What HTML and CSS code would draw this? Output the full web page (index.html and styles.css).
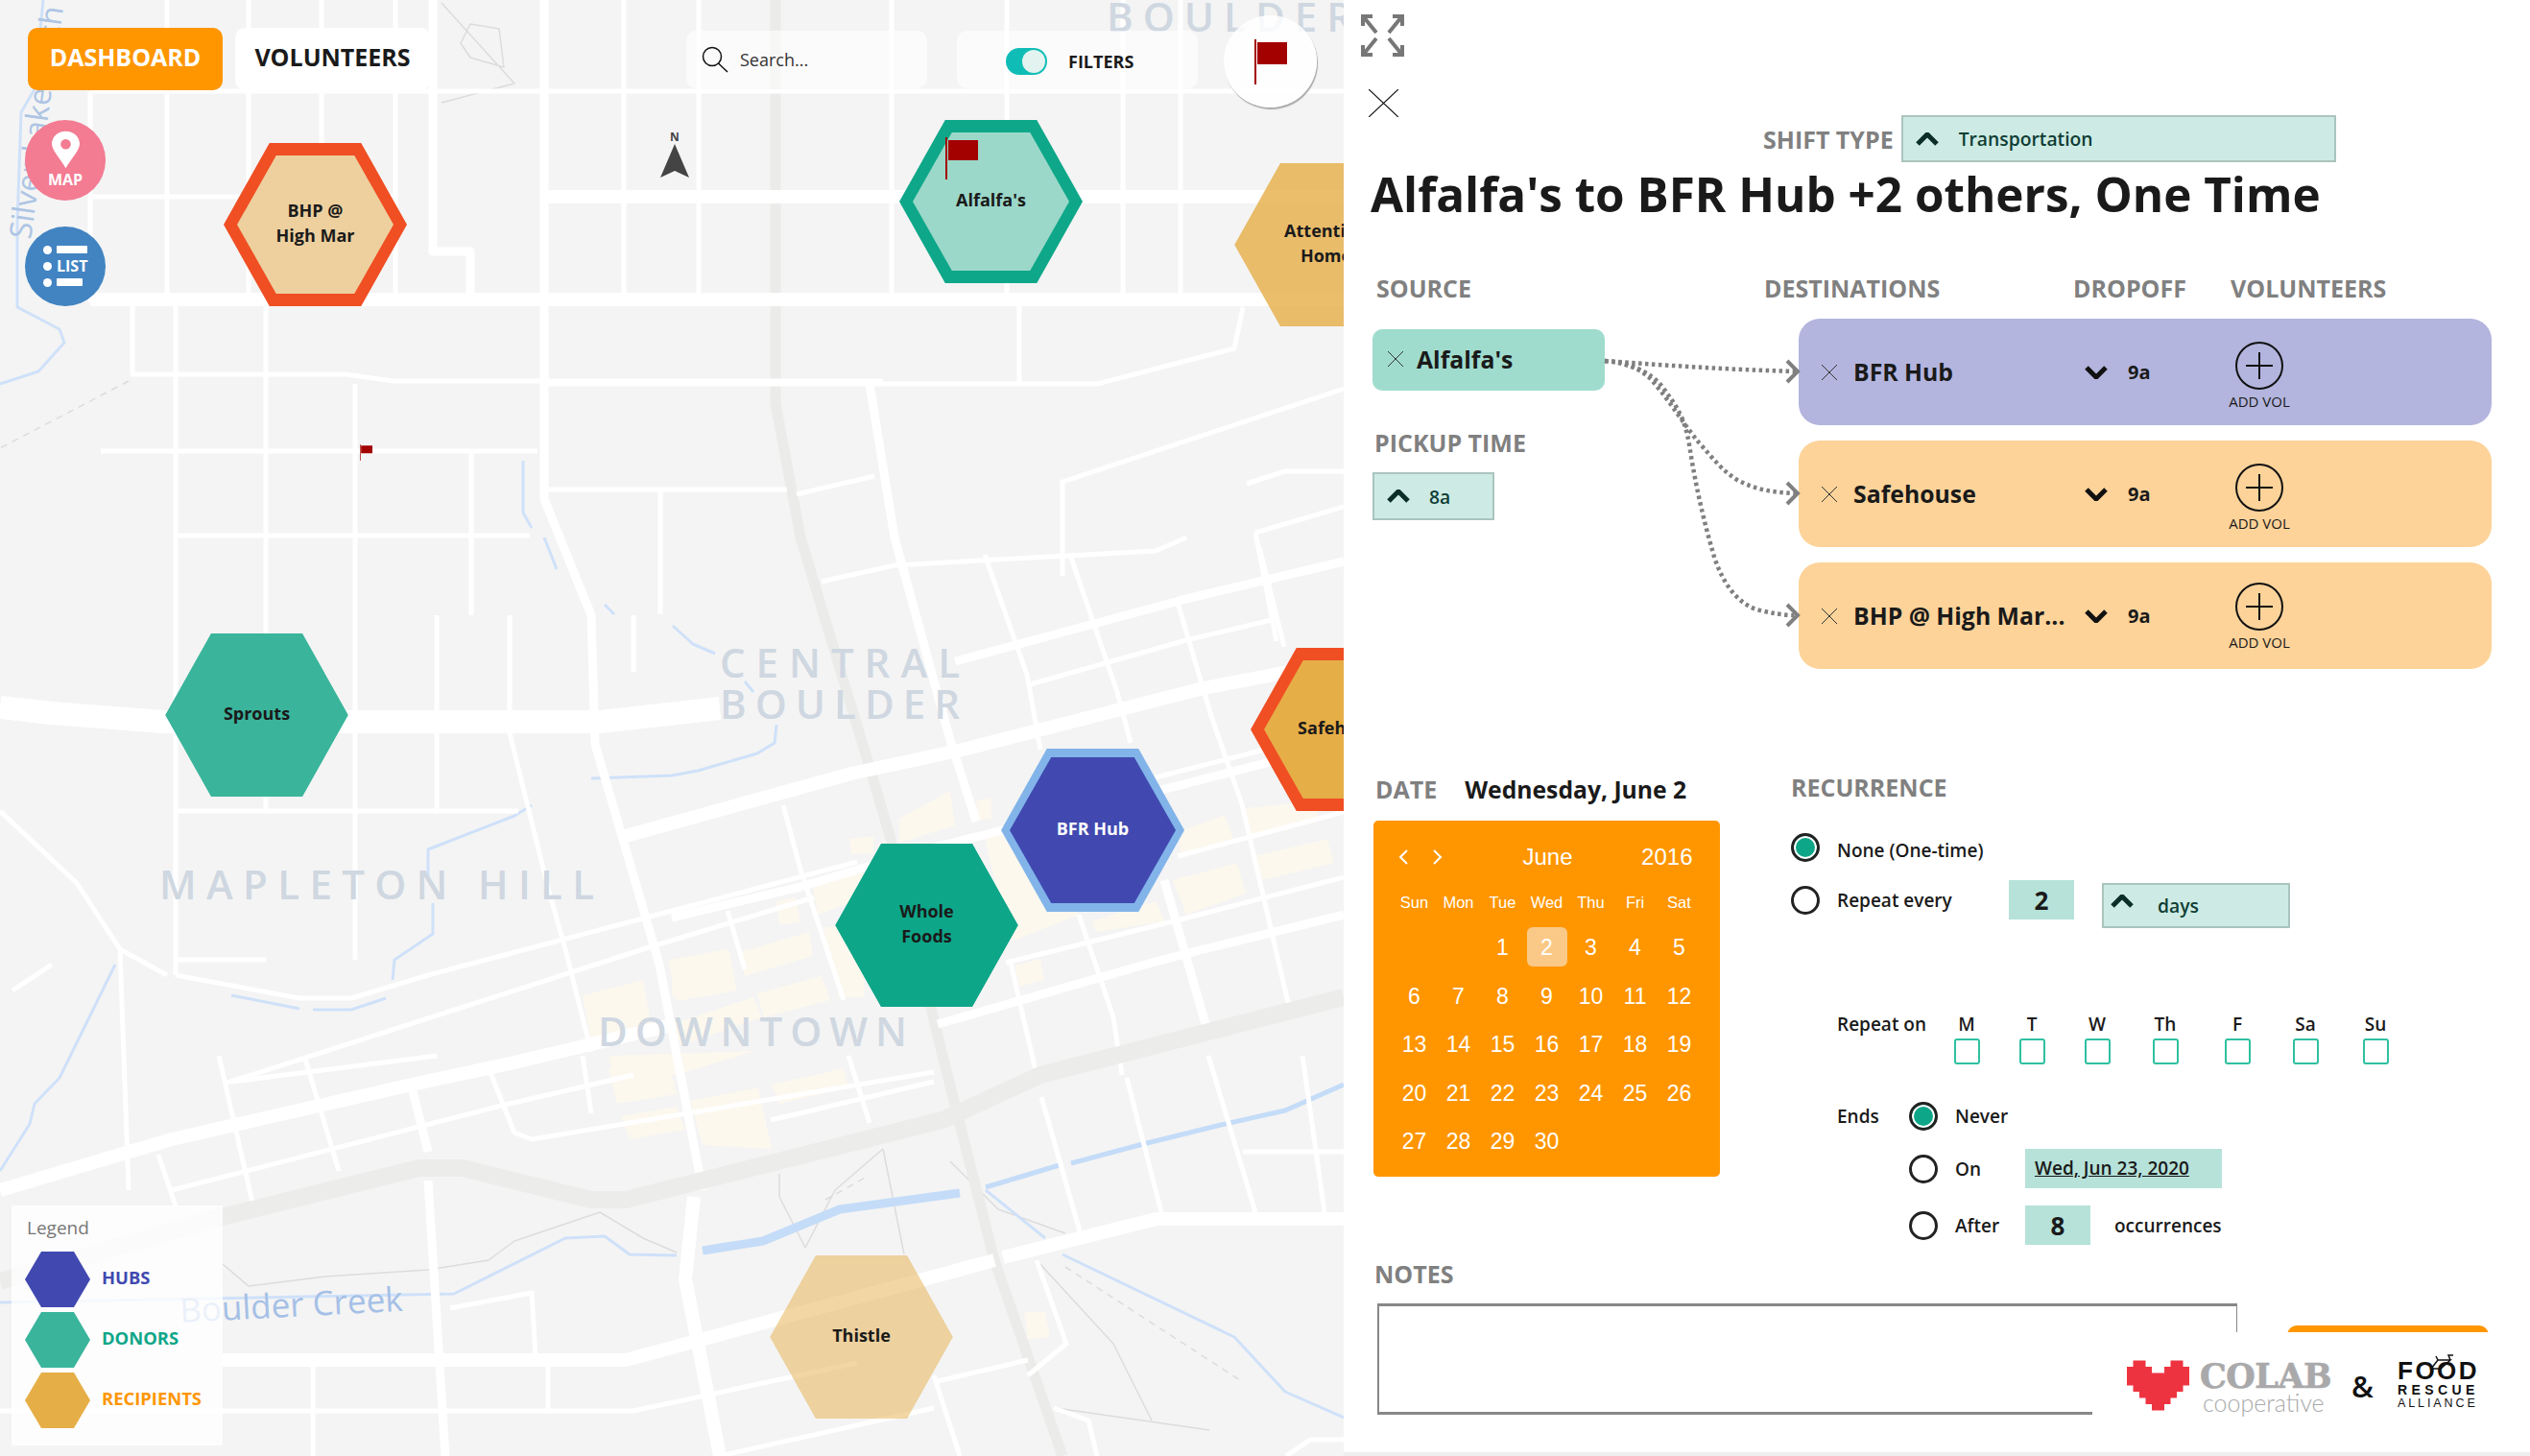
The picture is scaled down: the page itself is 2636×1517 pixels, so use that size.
FILE: index.html
```html
<!DOCTYPE html>
<html lang="en">
  <head>
    <meta charset="UTF-8">
    <title>Shift editor</title>
    <link rel="stylesheet" href="styles.css">
  </head>
  <body>
    <div class="stage">
      <div class="map">
        <svg class="map-art" viewBox="0 0 1400 1517" aria-hidden="true">
          <g class="blocks">
            <path d="M937 853L990 824L995 860L937 878ZM1017 835L1033 831L1033 853L1019 855ZM885 874L910 871L910 889L887 890ZM847 924L914 903L914 930L852 953ZM809 939L829 935L834 960L812 964ZM771 992L843 971L847 996L776 1017ZM700 1014L758 996L762 1024L700 1039ZM858 967L896 960L901 1039L874 1039ZM789 1035L856 1017L865 1042L796 1060ZM700 1067L785 1039L794 1060L709 1089ZM1026 874L1080 860L1124 953L1053 981ZM1222 917L1289 899L1298 931L1236 953ZM1298 842L1370 835L1374 856L1303 874ZM1227 867L1276 849L1285 874L1231 892ZM1307 892L1383 874L1390 899L1316 917ZM1137 960L1205 939L1213 960L1142 971ZM1057 1006L1084 999L1088 1021L1062 1028ZM634 1113L696 1107L705 1140L643 1150ZM647 1163L705 1153L714 1177L656 1187ZM719 1147L790 1133L804 1197L732 1193ZM804 1130L879 1113L884 1133L812 1150ZM634 1100L786 1095L705 1120L638 1117ZM1067 1367L1089 1367L1094 1393L1071 1395ZM607 1037L670 1021L679 1070L616 1085ZM696 1000L759 989L768 1032L705 1043Z"/>
          </g>
          <g class="trail">
            <path d="M460 3L536 87L460 107M480 45L490 25L520 30L525 70L490 60ZM232 1317L259 1340L339 1330L446 1323L509 1313L536 1293L625 1263L670 1290L705 1305M839 1300L812 1247L812 1223M920 1197L942 1307M990 1210L1040 1260L1110 1285M920 1197L870 1240L839 1300M1080 1313L1160 1400L1200 1480M1100 1467L1260 1490"/>
            <path class="trail-dash" d="M134 397L0 467M1110 1320L1295 1440M860 1250L905 1225"/>
          </g>
          <g class="creek">
            <path d="M45 0L36 93L22 117L18 233L18 320L62 343L67 357L40 387L0 400"/>
            <path d="M545 480L545 534L554 550M567 560L580 593M630 630L640 640M701 652L722 671L745 681M776 710L785 721M809 755L807 774L789 785L727 803L700 808L616 811M554 839L536 850L446 885L446 914M451 941L451 973L411 1000L409 1021M241 1037L312 1051M326 1052L366 1052L402 1040"/>
            <path d="M120 1005L62 1123L36 1150L31 1171L0 1220M129 992L165 1010"/>
            <path d="M0 1357L473 1348L589 1290L630 1288L656 1307L705 1308M1027 1240L1089 1290M1107 1307L1286 1393L1339 1450L1400 1477"/>
            <path class="creek-wide" d="M732 1303L795 1293L875 1260L1000 1243"/>
            <path class="creek-mid" d="M1027 1237L1107 1213M1116 1212L1187 1193L1268 1173L1339 1157L1400 1130"/>
          </g>
          <g class="rail">
            <path d="M808 0V420L834 560L905 796L928 874L982 1100L1036 1313L1107 1517"/>
          </g>
          <g class="road">
            <path d="M94 95V315M174 0V312M259 0V312M335 0V312M412 0V312M650 0V312M728 0V312M929 0V312M1049 0V312M1170 0V312M1230 0V312M94 95H1400M94 205H412"/>
            <path d="M138 312V390H360L410 397H920M571 400H1143L1286 363L1295 320M1062 312V400M183 312V1016M277 312V845M370 400V1000M491 470V641M455 641V845M531 641V764L571 925L589 989L616 1096M660 641V700M688 510V640M105 470H560M183 558H552M571 510H820M183 845H540M183 1000H277"/>
            <path d="M830 515L911 496M1400 405L1107 502V600M1299 504L1339 491H1400M1308 555L1400 528M1308 555L1330 668M856 606L932 589L1204 574L1236 560M1026 578L1070 703L1084 781M1115 578L1164 721L1178 774M1227 628L1262 746L1294 838L1343 1049M1312 570L1338 674M1070 714L1236 667L1325 646M1204 810L1400 760M1227 892L1400 846M1048 1003L1222 960L1400 914"/>
            <path d="M816 839L834 906L879 1042M758 949L776 1010M1124 953L1160 1060L1169 1120M1053 1003L1080 1120M0 845L80 920L125 989L174 1016M13 1032L54 1005M125 989L134 1240M183 1016L312 1040H366L446 1016L893 898M237 1128L670 989L848 935M179 1240L518 1153L660 1120M241 1127L455 1100M228 1100L263 1253M317 1100L353 1220M165 1203L183 1257M509 1113L536 1180L554 1187L973 1117M607 1100L616 1160M884 1100L906 1170M803 1167L973 1127M1085 1143L1125 1283M1174 1123L1210 1263M1259 1100L1308 1263M1357 1100L1380 1263M1295 1200H1400"/>
            <path d="M0 1470H660L893 1420M973 1440L1071 1417M750 1517L973 1467M469 1363L554 1347L558 1413M326 1420V1517M571 1420V1470M973 1433L1000 1517M1080 1313L1111 1400L1071 1433M1098 1467L1134 1480L1143 1517M1340 1517L1365 1500H1400"/>
          </g>
          <g class="road-mid">
            <path d="M451 0V262H490V312M567 0V520L616 641L620 775L687 1005L732 1240M995 689L1236 624L1400 585M700 956L834 924L950 889L1021 871L1164 835L1400 774M977 1067L1200 1003L1254 989L1400 953M1213 917L1258 1074M932 560L990 771L1017 856M906 400L932 560M429 1133L446 1200M446 1230L464 1517"/>
          </g>
          <g class="road-big">
            <path d="M94 312H1400M571 205H1400M652 871L887 806L1003 781L1254 717L1400 689M0 1240L179 1187L429 1130L536 1107L700 1068M232 1417H652L1036 1313M1045 1310L1205 1270H1400"/>
            <path d="M723 1247L714 1333L750 1517"/>
          </g>
          <g class="highway">
            <path d="M0 1335L223 1270L437 1217H482L616 1250H652L982 1167L1084 1120L1400 1039"/>
          </g>
          <path class="road-wide" d="M0 737L54 743L170 752H625L750 738"/>
          <g class="map-labels">
            <text x="1153" y="33" textLength="256">BOULDER</text>
            <text x="750" y="706" textLength="250">CENTRAL</text>
            <text x="750" y="749" textLength="250">BOULDER</text>
            <text x="166" y="937" textLength="453">MAPLETON HILL</text>
            <text x="623" y="1090" textLength="322">DOWNTOWN</text>
          </g>
          <text class="water-label water-ditch" transform="translate(32 250) rotate(-82)">Silver Lake Ditch</text>
          <text class="water-label" transform="translate(188 1378) rotate(-3)">Boulder Creek</text>
        </svg>

        <div class="hex node-bhp hex-ring-red"><div class="hex-in fill-pale">BHP @<br>High Mar</div></div>
        <div class="hex node-alfalfa hex-ring-green"><div class="hex-in fill-mint">Alfalfa's</div></div>
        <div class="hex node-attention"><div class="hex-in fill-sand">Attention<br>Home</div></div>
        <div class="hex node-sprouts"><div class="hex-in fill-teal">Sprouts</div></div>
        <div class="hex node-whole"><div class="hex-in fill-green">Whole<br>Foods</div></div>
        <div class="hex node-bfr hex-ring-blue"><div class="hex-in fill-indigo">BFR Hub</div></div>
        <div class="hex node-safe hex-ring-thin"><div class="hex-in fill-amber">Safehouse</div></div>
        <div class="hex node-thistle"><div class="hex-in fill-clear">Thistle</div></div>

        <svg class="flag flag-alfalfa" viewBox="0 0 34 44"><path d="M1 0V44" class="flag-pole"/><path d="M3 3H34V24H3Z"/></svg>
        <svg class="flag flag-small" viewBox="0 0 34 44"><path d="M1 0V44" class="flag-pole"/><path d="M3 3H34V24H3Z"/></svg>

        <svg class="north" viewBox="0 0 34 50">
          <text x="17" y="10">N</text>
          <path d="M17 13L32 48L17 41L2 48Z"/>
        </svg>

        <div class="nav-tabs">
          <div class="nav-tab active">DASHBOARD</div>
          <div class="nav-tab">VOLUNTEERS</div>
        </div>

        <div class="view-switch">
          <div class="view-btn view-map">
            <svg viewBox="0 0 30 40" class="pin"><path fill-rule="evenodd" d="M15 40C9 29 0 21 0 13.500C0 6 6.500 0 15 0S30 6 30 13.500C30 21 21 29 15 40ZM15 8.500A5.500 5.500 0 1 0 15 19.500A5.500 5.500 0 1 0 15 8.500Z"/></svg>
            <span>MAP</span>
          </div>
          <div class="view-btn view-list">
            <div class="list-row"><i></i><b></b></div>
            <div class="list-row"><i></i><span>LIST</span></div>
            <div class="list-row"><i></i><b class="short"></b></div>
          </div>
        </div>

        <div class="map-tools">
          <div class="tool-box search-box">
            <svg viewBox="0 0 28 28" class="search-icon"><circle cx="11" cy="11" r="9.500"/><path d="M17.500 18L27 27"/></svg>
            <span>Search...</span>
          </div>
          <div class="tool-box filter-box">
            <div class="toggle"><i></i></div>
            <span>FILTERS</span>
          </div>
          <div class="flag-btn">
            <svg class="flag flag-large" viewBox="0 0 34 47"><path d="M1 0V47" class="flag-pole"/><path d="M3 3H34V26H3Z"/></svg>
          </div>
        </div>

        <div class="legend">
          <div class="legend-title">Legend</div>
          <div class="legend-row"><div class="legend-hex hubs"></div><span class="text-hubs">HUBS</span></div>
          <div class="legend-row"><div class="legend-hex donors"></div><span class="text-donors">DONORS</span></div>
          <div class="legend-row"><div class="legend-hex recipients"></div><span class="text-recipients">RECIPIENTS</span></div>
        </div>
      </div>

      <div class="panel">
        <div class="panel-head">
          <div class="panel-tools">
            <svg class="expand-icon" viewBox="0 0 45 44">
              <path d="M2 12V2H12M3 3L16 19M43 12V2H33M42 3L29 19M2 32V42H12M3 41L16 25M43 32V42H33M42 41L29 25"/>
            </svg>
            <svg class="close-icon" viewBox="0 0 31 29"><path d="M0 0L31 29M31 0L0 29"/></svg>
          </div>
          <div class="shift-type">
            <span class="label">SHIFT TYPE</span>
            <div class="select select-wide">
              <svg class="chev chev-up" viewBox="0 0 24 14"><path d="M2 12L12 2L22 12"/></svg>
              <span>Transportation</span>
            </div>
          </div>
        </div>

        <h1 class="title">Alfalfa's to BFR Hub +2 others, One Time</h1>

        <div class="route">
          <div class="route-source">
            <div class="label label-source">SOURCE</div>
            <div class="source-chip">
              <svg class="x-icon" viewBox="0 0 18 18"><path d="M1 1L17 17M17 1L1 17"/></svg>
              <span>Alfalfa's</span>
            </div>
            <div class="label label-pickup">PICKUP TIME</div>
            <div class="select select-time">
              <svg class="chev chev-up" viewBox="0 0 24 14"><path d="M2 12L12 2L22 12"/></svg>
              <span>8a</span>
            </div>
          </div>
          <div class="route-dest">
            <div class="dest-head">
              <span class="label">DESTINATIONS</span>
              <span class="label">DROPOFF</span>
              <span class="label">VOLUNTEERS</span>
            </div>
            <div class="dest-row dest-hub">
              <svg class="x-icon" viewBox="0 0 18 18"><path d="M1 1L17 17M17 1L1 17"/></svg>
              <div class="dest-name">BFR Hub</div>
              <svg class="chev" viewBox="0 0 24 14"><path d="M2 2L12 12L22 2"/></svg>
              <div class="dest-time">9a</div>
              <div class="add-vol">
                <svg viewBox="0 0 50 50"><circle cx="25" cy="25" r="24"/><path d="M25 11V39M11 25H39"/></svg>
                <span>ADD VOL</span>
              </div>
            </div>
            <div class="dest-row dest-stop">
              <svg class="x-icon" viewBox="0 0 18 18"><path d="M1 1L17 17M17 1L1 17"/></svg>
              <div class="dest-name">Safehouse</div>
              <svg class="chev" viewBox="0 0 24 14"><path d="M2 2L12 12L22 2"/></svg>
              <div class="dest-time">9a</div>
              <div class="add-vol">
                <svg viewBox="0 0 50 50"><circle cx="25" cy="25" r="24"/><path d="M25 11V39M11 25H39"/></svg>
                <span>ADD VOL</span>
              </div>
            </div>
            <div class="dest-row dest-stop">
              <svg class="x-icon" viewBox="0 0 18 18"><path d="M1 1L17 17M17 1L1 17"/></svg>
              <div class="dest-name">BHP @ High Mar...</div>
              <svg class="chev" viewBox="0 0 24 14"><path d="M2 2L12 12L22 2"/></svg>
              <div class="dest-time">9a</div>
              <div class="add-vol add-vol-tight">
                <svg viewBox="0 0 50 50"><circle cx="25" cy="25" r="24"/><path d="M25 11V39M11 25H39"/></svg>
                <span>ADD VOL</span>
              </div>
            </div>
          </div>
          <svg class="connectors" viewBox="0 0 210 330">
            <path class="link" d="M2 33C70 38 130 42 200 44"/>
            <path class="link" d="M2 33C25 35 40 42 50 52C70 75 85 100 100 118C115 135 125 148 140 157C160 168 180 170 200 171"/>
            <path class="link" d="M2 33C30 35 50 45 62 60C75 78 85 90 90 120C96 160 105 200 116 237C125 265 140 285 160 292C175 296 190 298 200 298"/>
            <path class="tip" d="M192 33L203 44L192 55M192 160L203 171L192 182M192 287L203 298L192 309"/>
          </svg>
        </div>

        <div class="schedule">
          <div class="date-col">
            <div class="date-line">
              <span class="label">DATE</span>
              <span class="date-value">Wednesday, June 2</span>
            </div>
            <div class="calendar">
              <div class="cal-head">
                <svg viewBox="0 0 10 16" class="cal-nav"><path d="M9 1L2 8L9 15"/></svg>
                <svg viewBox="0 0 10 16" class="cal-nav cal-next"><path d="M1 1L8 8L1 15"/></svg>
                <span class="cal-month">June</span>
                <span class="cal-year">2016</span>
              </div>
              <div class="cal-week">
                <span>Sun</span><span>Mon</span><span>Tue</span><span>Wed</span><span>Thu</span><span>Fri</span><span>Sat</span>
              </div>
              <div class="cal-days">
                <span></span><span></span>
                <span>1</span><span class="selected">2</span><span>3</span><span>4</span><span>5</span>
                <span>6</span><span>7</span><span>8</span><span>9</span><span>10</span><span>11</span><span>12</span>
                <span>13</span><span>14</span><span>15</span><span>16</span><span>17</span><span>18</span><span>19</span>
                <span>20</span><span>21</span><span>22</span><span>23</span><span>24</span><span>25</span><span>26</span>
                <span>27</span><span>28</span><span>29</span><span>30</span>
              </div>
            </div>
          </div>

          <div class="rec-col">
            <div class="label rec-title">RECURRENCE</div>
            <div class="rec-row rec-none">
              <i class="radio on"></i>
              <span>None (One-time)</span>
            </div>
            <div class="rec-row rec-every">
              <i class="radio"></i>
              <span class="every-label">Repeat every</span>
              <div class="num-box">2</div>
              <div class="select select-unit">
                <svg class="chev chev-up" viewBox="0 0 24 14"><path d="M2 12L12 2L22 12"/></svg>
                <span>days</span>
              </div>
            </div>
            <div class="repeat-on">
              <span class="repeat-label">Repeat on</span>
              <span>M</span><span>T</span><span>W</span><span>Th</span><span>F</span><span>Sa</span><span>Su</span>
              <span></span>
              <i class="check"></i><i class="check"></i><i class="check"></i><i class="check"></i><i class="check"></i><i class="check"></i><i class="check"></i>
            </div>
            <div class="ends">
              <div class="ends-label">Ends</div>
              <div class="ends-list">
                <div class="rec-row end-never"><i class="radio on"></i><span>Never</span></div>
                <div class="rec-row end-row"><i class="radio"></i><span class="end-label">On</span><div class="date-box">Wed, Jun 23, 2020</div></div>
                <div class="rec-row end-row"><i class="radio"></i><span class="end-label">After</span><div class="num-box">8</div><span class="occ">occurrences</span></div>
              </div>
            </div>
          </div>
        </div>

        <div class="label notes-label">NOTES</div>
        <div class="notes-row">
          <textarea class="notes"></textarea>
          <button class="save-btn" aria-label="Save"></button>
        </div>

        <div class="credits">
          <svg class="heart" viewBox="0 0 10 8"><path d="M1 0H3V1H4V2H6V1H7V0H9V1H10V4H9V5H8V6H7V7H6V8H4V7H3V6H2V5H1V4H0V1H1Z"/></svg>
          <div class="colab">
            <div class="colab-name">COLAB</div>
            <div class="colab-sub">cooperative</div>
          </div>
          <span class="amp">&amp;</span>
          <div class="fra">
            <div class="fra-food">FOOD</div>
            <svg class="bike" viewBox="0 0 44 14"><path d="M13 14L20 5H33L23 14ZM20 5L18 1M33 5L31 0H36"/></svg>
            <div class="fra-rescue">RESCUE</div>
            <div class="fra-alliance">ALLIANCE</div>
          </div>
        </div>
      </div>
    </div>
  </body>
</html>
```
FILE: styles.css
```css
html, body {
  margin: 0;
  padding: 0;
}

body {
  font-family: "Open Sans", sans-serif;
  color: #1a1a1a;
  background: #fff;
}

.stage {
  display: flex;
  width: 2636px;
  height: 1517px;
  overflow: hidden;
  background: #eee;
}

/* map side */

.map {
  position: relative;
  width: 1400px;
  height: 1517px;
  overflow: hidden;
  background: #f4f4f4;
}

.map-art {
  position: absolute;
  left: 0;
  top: 0;
  width: 1400px;
  height: 1517px;
}

.map-art path {
  fill: none;
  stroke-linejoin: round;
}

.map-art .blocks path {
  fill: #fcf8ee;
}

.trail path {
  stroke: #dcdcdc;
  stroke-width: 1.500;
}

.trail .trail-dash {
  stroke-dasharray: 7 6;
}

.creek path {
  stroke: #cfe1f9;
  stroke-width: 3;
}

.creek .creek-wide {
  stroke: #c4dcf8;
  stroke-width: 9;
}

.creek .creek-mid {
  stroke: #c4dcf8;
  stroke-width: 5;
}

.rail path {
  stroke: #ebebe9;
  stroke-width: 11;
}

.road path {
  stroke: #fff;
  stroke-width: 5;
}

.road-mid path {
  stroke: #fff;
  stroke-width: 9;
}

.road-big path {
  stroke: #fff;
  stroke-width: 14;
}

.highway path {
  stroke: #ececea;
  stroke-width: 18;
}

.map-art .road-wide {
  stroke: #fff;
  stroke-width: 24;
}

.map-labels text {
  font-size: 42px;
  font-weight: 600;
  fill: #cfd7e1;
}

.water-label {
  font-size: 35px;
  fill: #a5c0e6;
}

.water-ditch {
  font-size: 32px;
  fill: #aec5e4;
}

.hex {
  position: absolute;
  width: 191px;
  height: 170px;
  clip-path: polygon(25% 0, 75% 0, 100% 50%, 75% 100%, 25% 100%, 0 50%);
}

.hex-in {
  position: absolute;
  inset: 0;
  display: flex;
  align-items: center;
  justify-content: center;
  box-sizing: border-box;
  padding-bottom: 5px;
  text-align: center;
  font-size: 18px;
  font-weight: 700;
  line-height: 26px;
  clip-path: polygon(25% 0, 75% 0, 100% 50%, 75% 100%, 25% 100%, 0 50%);
}

.hex-ring-red {
  background: #f04e23;
}

.hex-ring-green {
  background: #0ea789;
}

.hex-ring-blue {
  background: #82b4e9;
}

.hex-ring-thin {
  background: #f04e23;
}

.hex-ring-red .hex-in,
.hex-ring-green .hex-in,
.hex-ring-thin .hex-in {
  inset: 13px 14px;
}

.hex-ring-blue .hex-in {
  inset: 9px;
}

.fill-pale {
  background: #edd09e;
}

.fill-clear {
  background: rgba(230, 174, 71, 0.5);
}

.fill-mint {
  background: #9bd8c9;
}

.fill-sand {
  background: rgba(230, 174, 71, 0.8);
}

.fill-teal {
  background: #3ab59c;
}

.fill-green {
  background: #0ea688;
}

.fill-indigo {
  background: #4149b0;
  color: #fff;
}

.fill-amber {
  background: #e6ae47;
}

.node-bhp {
  left: 233px;
  top: 149px;
}

.node-alfalfa {
  left: 937px;
  top: 125px;
}

.node-attention {
  left: 1286px;
  top: 170px;
}

.node-sprouts {
  left: 172px;
  top: 660px;
}

.node-whole {
  left: 870px;
  top: 879px;
}

.node-bfr {
  left: 1043px;
  top: 780px;
}

.node-safe {
  left: 1303px;
  top: 675px;
}

.node-thistle {
  left: 802px;
  top: 1308px;
}

.flag {
  display: block;
  fill: #a30000;
}

.flag .flag-pole {
  fill: none;
  stroke: #a30000;
  stroke-width: 2;
}

.flag-alfalfa {
  position: absolute;
  left: 985px;
  top: 143px;
  width: 34px;
  height: 44px;
}

.flag-small {
  position: absolute;
  left: 375px;
  top: 463px;
  width: 13px;
  height: 17px;
}

.flag-large {
  width: 34px;
  height: 47px;
}

.north {
  position: absolute;
  left: 686px;
  top: 137px;
  width: 34px;
  height: 50px;
  fill: #444;
}

.north text {
  font-size: 12px;
  font-weight: 700;
  text-anchor: middle;
}

.nav-tabs {
  position: absolute;
  left: 29px;
  top: 29px;
  display: flex;
  gap: 13px;
}

.nav-tab {
  display: flex;
  align-items: center;
  justify-content: center;
  width: 203px;
  height: 65px;
  padding-bottom: 6px;
  box-sizing: border-box;
  border-radius: 10px;
  background: #fff;
  font-size: 25px;
  font-weight: 700;
}

.nav-tab.active {
  background: #ff9600;
  color: #fff;
}

.view-switch {
  position: absolute;
  left: 26px;
  top: 125px;
  display: flex;
  flex-direction: column;
  gap: 27px;
}

.view-btn {
  display: flex;
  flex-direction: column;
  align-items: center;
  justify-content: center;
  width: 84px;
  height: 83.500px;
  border-radius: 50%;
  color: #fff;
  font-size: 16px;
  font-weight: 700;
}

.view-map {
  background: #f37b92;
  line-height: 20px;
}

.pin {
  width: 29px;
  height: 40px;
  margin-bottom: 1px;
  fill: #fff;
}

.view-list {
  background: #4284c2;
  gap: 6px;
}

.list-row {
  display: flex;
  align-items: center;
  gap: 5px;
  width: 46px;
  height: 11px;
  line-height: 11px;
}

.list-row i {
  flex: none;
  width: 9px;
  height: 9px;
  border-radius: 50%;
  background: #fff;
}

.list-row b {
  width: 32px;
  height: 8px;
  border-radius: 1px;
  background: #fff;
}

.list-row b.short {
  width: 27px;
}

.map-tools {
  position: absolute;
  left: 715px;
  top: 32px;
  display: flex;
  gap: 31px;
  align-items: flex-start;
}

.tool-box {
  display: flex;
  align-items: center;
  width: 251px;
  height: 60px;
  border-radius: 10px;
  background: rgba(255, 255, 255, 0.6);
}

.search-box {
  padding-left: 16px;
  box-sizing: border-box;
  gap: 12px;
  font-size: 18px;
  color: #333;
}

.search-icon {
  width: 28px;
  height: 28px;
  fill: none;
  stroke: #111;
  stroke-width: 1.500;
}

.filter-box {
  padding: 4px 0 0 51px;
  box-sizing: border-box;
  gap: 22px;
  font-size: 18px;
  font-weight: 700;
}

.toggle {
  display: flex;
  align-items: center;
  justify-content: flex-end;
  width: 43px;
  height: 28px;
  border-radius: 14px;
  background: #10bdb6;
}

.toggle i {
  width: 24px;
  height: 24px;
  margin-right: 2px;
  border-radius: 50%;
  background: #e2f3f0;
}

.flag-btn {
  display: flex;
  align-items: center;
  justify-content: center;
  width: 97px;
  height: 96px;
  margin: -16px 0 0 -4px;
  border-radius: 50%;
  background: rgba(255, 255, 255, 0.85);
  box-shadow: 1px 2px 1px #aaa;
}

.legend {
  position: absolute;
  left: 12px;
  top: 1256px;
  width: 220px;
  height: 250px;
  box-sizing: border-box;
  padding: 8px 14px 10px;
  background: rgba(255, 255, 255, 0.78);
}

.legend-title {
  height: 37.500px;
  padding-left: 2px;
  font-size: 19px;
  line-height: 30px;
  color: #777;
}

.legend-row {
  display: flex;
  align-items: center;
  gap: 12px;
  height: 63px;
  font-size: 18.400px;
  font-weight: 700;
}

.legend-row span {
  margin-bottom: 5px;
}

.legend-hex {
  width: 68px;
  height: 58px;
  clip-path: polygon(25% 0, 75% 0, 100% 50%, 75% 100%, 25% 100%, 0 50%);
}

.hubs {
  background: #4149b0;
}

.donors {
  background: #3ab59c;
}

.recipients {
  background: #e6ae47;
}

.text-hubs {
  color: #4149b0;
}

.text-donors {
  color: #0ea688;
}

.text-recipients {
  color: #ff9600;
}

/* form side */

.panel {
  position: relative;
  width: 1236px;
  height: 1513px;
  box-sizing: border-box;
  padding-left: 30px;
  background: #fff;
  overflow: hidden;
}

.label {
  font-size: 25px;
  font-weight: 700;
  line-height: 30px;
  color: #808080;
}

.panel-head {
  display: flex;
  margin-left: -30px;
  padding-top: 15px;
}

.panel-tools {
  display: flex;
  flex-direction: column;
  gap: 34px;
  width: 437px;
  padding-left: 18px;
  box-sizing: border-box;
}

.expand-icon {
  width: 45px;
  height: 44px;
  fill: none;
  stroke: #777;
  stroke-width: 4;
}

.close-icon {
  width: 31px;
  height: 29px;
  margin-left: 8px;
  fill: none;
  stroke: #111;
  stroke-width: 1.200;
}

.shift-type {
  display: flex;
  align-items: center;
  gap: 8px;
  margin-top: 105px;
}

.select {
  display: flex;
  align-items: center;
  box-sizing: border-box;
  background: #cdebe4;
  border: 2px solid #aac4be;
  font-size: 19.300px;
  font-weight: 600;
  color: #0f3d35;
}

.select-wide {
  width: 453px;
  height: 49px;
  padding-left: 13px;
  gap: 21px;
}

.select-time {
  width: 127px;
  height: 50px;
  padding-left: 13px;
  gap: 20px;
}

.select-unit {
  position: relative;
  top: 3px;
  align-self: flex-start;
  width: 196px;
  height: 47px;
  margin-left: 29px;
  padding-left: 7px;
  gap: 25px;
}

.select-unit .chev {
  margin-bottom: 10px;
}

.chev {
  flex: none;
  width: 24px;
  height: 14px;
  fill: none;
  stroke: #111;
  stroke-width: 5;
}

.chev-up {
  stroke: #0b2e28;
}

.title {
  margin: 3px 0 0 -2px;
  font-size: 49.400px;
  font-weight: 700;
  line-height: 60px;
  white-space: nowrap;
}

.route {
  position: relative;
  display: flex;
  margin-top: 53px;
}

.route-source {
  width: 408px;
}

.label-source {
  padding-left: 4px;
}

.source-chip {
  display: flex;
  align-items: center;
  gap: 13px;
  width: 242px;
  height: 64px;
  margin-top: 28px;
  padding: 0 0 3px 15px;
  box-sizing: border-box;
  border-radius: 10px;
  background: #9fdcce;
  font-size: 24.800px;
  font-weight: 700;
}

.x-icon {
  flex: none;
  width: 18px;
  height: 18px;
  fill: none;
  stroke: #333;
  stroke-width: 1;
}

.label-pickup {
  margin-top: 39px;
  padding-left: 2px;
}

.select-time.select {
  margin-top: 16px;
}

.dest-head {
  display: grid;
  grid-template-columns: 322px 164px auto;
  margin-bottom: 17px;
}

.dest-row {
  display: flex;
  align-items: center;
  width: 722px;
  height: 111px;
  margin: 0 0 16px 36px;
  padding-left: 23px;
  box-sizing: border-box;
  border-radius: 22px;
}

.dest-hub {
  background: #b3b5de;
}

.dest-stop {
  background: #fdd399;
}

.dest-name {
  width: 241px;
  margin: -2px 0 0 16px;
  font-size: 24.800px;
  font-weight: 700;
  white-space: nowrap;
}

.dest-time {
  width: 105px;
  margin-left: 21px;
  font-size: 20px;
  font-weight: 700;
}

.add-vol {
  align-self: flex-start;
  display: flex;
  flex-direction: column;
  align-items: center;
  width: 64px;
  padding-top: 24px;
  font-size: 15px;
  line-height: 20px;
  font-weight: 400;
  white-space: nowrap;
}

.add-vol-tight {
  padding-top: 21px;
}

.add-vol svg {
  width: 50px;
  height: 50px;
  margin-bottom: 2px;
  fill: none;
  stroke: #111;
  stroke-width: 2;
}

.connectors {
  position: absolute;
  left: 240px;
  top: 58px;
  width: 210px;
  height: 330px;
  fill: none;
}

.link {
  stroke: #808080;
  stroke-width: 4.500;
  stroke-dasharray: 3.500 3.500;
}

.tip {
  stroke: #808080;
  stroke-width: 4;
}

.schedule {
  display: flex;
  margin-top: 94px;
  padding-left: 1px;
}

.date-col {
  width: 435px;
}

.date-line {
  display: flex;
  align-items: baseline;
  gap: 29px;
  padding-left: 2px;
}

.date-value {
  font-size: 24.700px;
  font-weight: 700;
  line-height: 30px;
}

.calendar {
  width: 361px;
  height: 371px;
  margin-top: 17px;
  padding: 20px 18px 0 19.500px;
  box-sizing: border-box;
  border-radius: 5px;
  background: #ff9600;
  font-family: "Liberation Sans", sans-serif;
  color: #fff;
}

.cal-head {
  display: flex;
  align-items: center;
  height: 36px;
  font-size: 24px;
}

.cal-nav {
  width: 10px;
  height: 16px;
  margin-left: 6px;
  fill: none;
  stroke: #fff;
  stroke-width: 2;
}

.cal-next {
  margin-left: 26px;
}

.cal-month {
  margin-left: 84px;
}

.cal-year {
  margin-left: auto;
  margin-right: 10.500px;
}

.cal-week,
.cal-days {
  display: grid;
  grid-template-columns: repeat(7, 46px);
  text-align: center;
}

.cal-week {
  margin-top: 19px;
  font-size: 16.500px;
  line-height: 20px;
}

.cal-days {
  margin-top: 12px;
  grid-auto-rows: 50.500px;
  font-size: 23px;
  line-height: 50.500px;
}

.cal-days .selected {
  width: 42px;
  height: 41px;
  margin: 4px 2px;
  border-radius: 6px;
  background: #fbc987;
  line-height: 42px;
}

.rec-col {
  font-size: 19px;
  font-weight: 600;
}

.rec-title {
  margin-top: -2px;
}

.rec-row {
  display: flex;
  align-items: center;
}

.radio {
  flex: none;
  width: 30px;
  height: 30px;
  box-sizing: border-box;
  border: 3px solid #222;
  border-radius: 50%;
  background: #fff;
}

.radio.on {
  background: #0ea688;
  box-shadow: inset 0 0 0 2px #fff;
}

.rec-none {
  gap: 18px;
  height: 30px;
  margin-top: 33px;
}

.rec-none span {
  position: relative;
  top: 3px;
}

.rec-every {
  height: 41px;
  margin-top: 19px;
}

.every-label {
  width: 179px;
  margin-left: 18px;
}

.num-box {
  display: flex;
  align-items: center;
  justify-content: center;
  width: 68px;
  height: 41px;
  background: #b6e2d9;
  font-size: 26px;
  font-weight: 700;
}

.repeat-on {
  display: grid;
  grid-template-columns: 101px 68px 68px 68px 74px 76px 66px 80px;
  grid-template-rows: 24px 26px;
  row-gap: 3px;
  margin: 97px 0 0 48px;
  line-height: 24px;
  text-align: center;
}

.repeat-label {
  text-align: left;
  white-space: nowrap;
}

.check {
  justify-self: center;
  width: 27px;
  height: 27px;
  box-sizing: border-box;
  border: 2px solid #2fc0a0;
  border-radius: 3px;
  background: #fff;
}

.ends {
  display: flex;
  margin: 40px 0 0 48px;
}

.ends-label {
  width: 75px;
  line-height: 30px;
}

.end-never {
  gap: 18px;
  height: 30px;
}

.end-row {
  height: 41px;
  margin-top: 19px;
}

.end-row + .end-row {
  margin-top: 18px;
}

.end-label {
  width: 73px;
  margin-left: 18px;
}

.date-box {
  width: 205px;
  height: 41px;
  padding-left: 10px;
  box-sizing: border-box;
  background: #b6e2d9;
  line-height: 41px;
  text-decoration: underline;
  white-space: nowrap;
}

.occ {
  margin-left: 25px;
}

.notes-label {
  margin-top: 15px;
  padding-left: 2px;
}

.notes-row {
  display: flex;
  gap: 52px;
  margin: 16px 0 0 5px;
}

.notes {
  display: block;
  width: 896px;
  height: 116px;
  margin: 0;
  padding: 0;
  box-sizing: border-box;
  border-style: solid;
  border-color: #888;
  border-width: 3px 1px 3px 2px;
  border-radius: 0;
  resize: none;
  background: #fff;
}

.save-btn {
  width: 210px;
  height: 60px;
  margin-top: 23px;
  border: none;
  border-radius: 10px;
  background: #ff9600;
}

.credits {
  position: absolute;
  left: 780px;
  top: 1388px;
  display: flex;
  align-items: center;
  width: 456px;
  height: 125px;
  box-sizing: border-box;
  padding-left: 36px;
  background: #fff;
}

.heart {
  width: 65px;
  height: 53px;
  margin-top: -14px;
  fill: #ee3340;
}

.colab {
  width: 158px;
  margin-left: 11px;
  margin-top: -10px;
}

.colab-name {
  font-family: "DejaVu Serif", serif;
  font-size: 35px;
  font-weight: 700;
  line-height: 32px;
  color: #a9a9ab;
  letter-spacing: -0.500px;
  -webkit-text-stroke: 0.600px #a9a9ab;
}

.colab-sub {
  margin-left: 3px;
  font-family: Lato, sans-serif;
  font-size: 25px;
  font-weight: 300;
  line-height: 23px;
  color: #a9a9ab;
}

.amp {
  width: 48px;
  margin-top: -14px;
  font-size: 31px;
  font-weight: 600;
  line-height: 30px;
  color: #111;
}

.fra {
  position: relative;
  width: 84px;
  margin-top: -14px;
  font-family: "Liberation Sans", sans-serif;
  color: #111;
}

.fra-food {
  font-size: 26px;
  font-weight: 700;
  line-height: 22px;
  letter-spacing: 2.500px;
  white-space: nowrap;
}

.bike {
  position: absolute;
  left: 22px;
  top: -10px;
  width: 44px;
  height: 24px;
  fill: none;
  stroke: #111;
  stroke-width: 1.500;
}

.fra-rescue {
  margin-top: 2px;
  font-size: 14px;
  font-weight: 700;
  line-height: 14px;
  letter-spacing: 4.400px;
}

.fra-alliance {
  font-size: 12.500px;
  line-height: 15px;
  letter-spacing: 2.900px;
}
```
